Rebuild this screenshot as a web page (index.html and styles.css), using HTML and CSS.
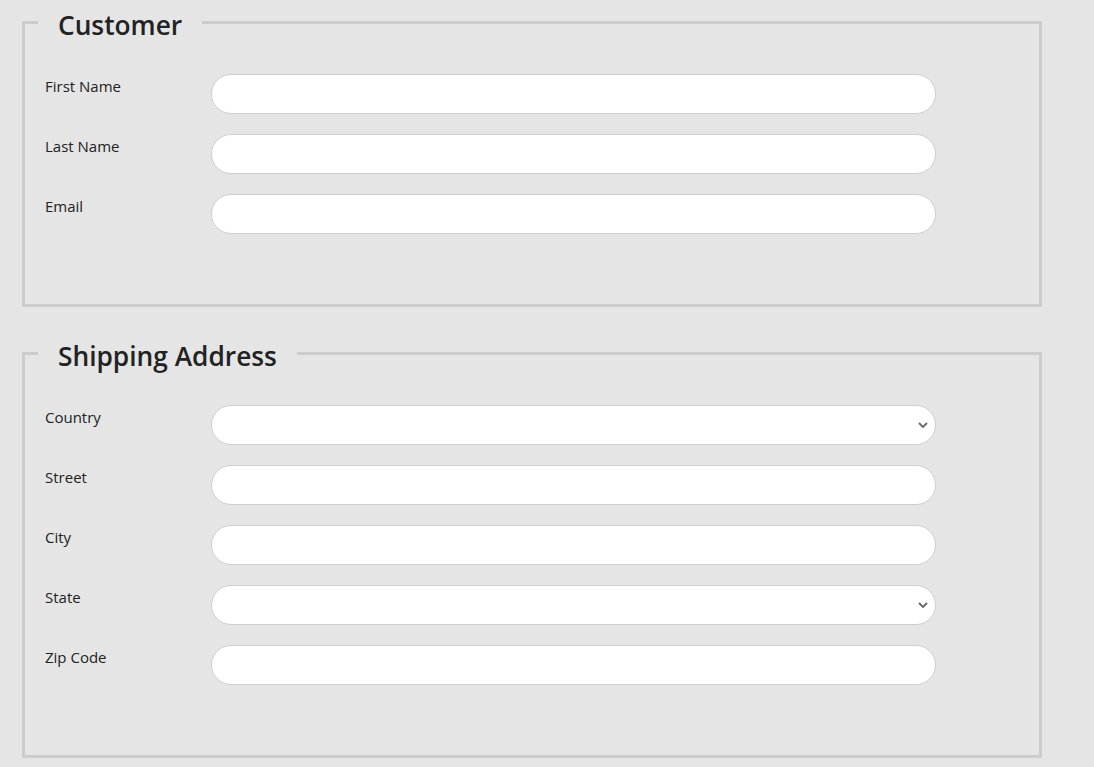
FILE: index.html
```html
<!DOCTYPE html>
<html>
<head>
<meta charset="utf-8">
<link rel="stylesheet" href="styles.css">
</head>
<body>
<form class="page">
  <fieldset class="group">
    <legend class="group-title">Customer</legend>
    <div class="rows">
      <label class="field-label">First Name</label><input class="field" type="text">
      <label class="field-label">Last Name</label><input class="field" type="text">
      <label class="field-label">Email</label><input class="field" type="text">
    </div>
  </fieldset>
  <fieldset class="group">
    <legend class="group-title">Shipping Address</legend>
    <div class="rows">
      <label class="field-label">Country</label><select class="field select"><option></option></select>
      <label class="field-label">Street</label><input class="field" type="text">
      <label class="field-label">City</label><input class="field" type="text">
      <label class="field-label">State</label><select class="field select"><option></option></select>
      <label class="field-label">Zip Code</label><input class="field" type="text">
    </div>
  </fieldset>
</form>
</body>
</html>
```
FILE: styles.css
```css
html, body {
  margin: 0;
  padding: 0;
  background: #e5e5e5;
}
body {
  font-family: "Open Sans", "Noto Sans", sans-serif;
  color: #222;
}
.page {
  padding: 2px 52px 0 22px;
  display: flex;
  flex-direction: column;
  gap: 26px;
  width: 1020px;
}
.group {
  margin: 0;
  border: 3px solid #cccccc;
  padding: 0 20px 70px 20px;
  min-width: 0;
}
.group-title {
  padding: 6px 20px 0 20px;
  margin-left: -7px;
  font-size: 26.3px;
  font-weight: 600;
  line-height: 34px;
  color: #222;
}
.rows {
  display: grid;
  grid-template-columns: 166px 725px;
  row-gap: 20px;
  padding-top: 32px;
}
.field-label {
  font-size: 15px;
  line-height: 20px;
  padding-top: 2px;
  color: #222;
}
.field {
  box-sizing: border-box;
  height: 40px;
  width: 725px;
  border: 1px solid #cfcfcf;
  border-radius: 20px;
  background: #fff;
  padding: 0 16px;
  font: inherit;
  font-size: 15px;
  margin: 0;
  outline: none;
}
.select {
  appearance: none;
  -webkit-appearance: none;
  background-image: url("data:image/svg+xml,%3Csvg xmlns='http://www.w3.org/2000/svg' width='10' height='6' viewBox='0 0 10 6'%3E%3Cpath d='M1 1l4 4 4-4' fill='none' stroke='%23666' stroke-width='1.8'/%3E%3C/svg%3E");
  background-repeat: no-repeat;
  background-position: right 7px center;
  background-size: 10px 6px;
}
```
